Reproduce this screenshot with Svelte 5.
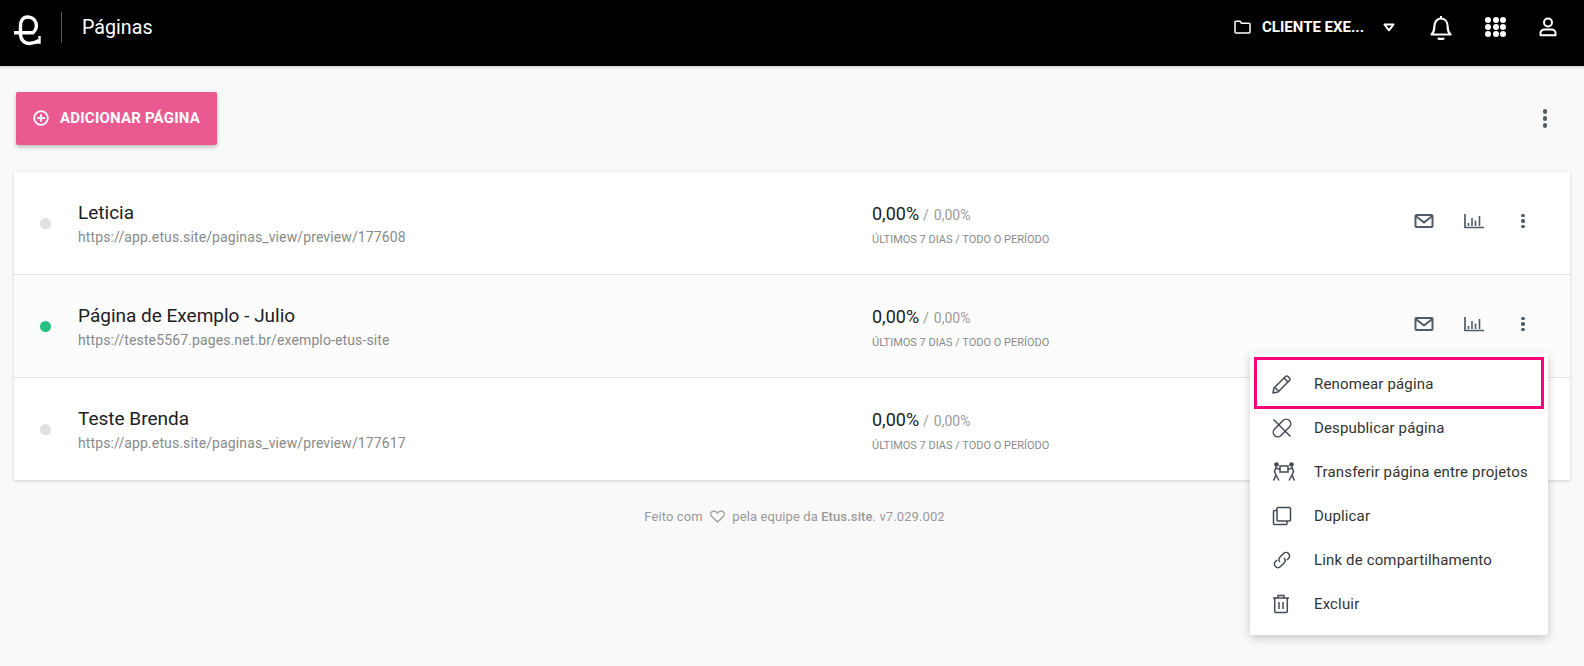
<script>
  const pages = [
    { name: 'Leticia', url: 'https://app.etus.site/paginas_view/preview/177608', on: false, hover: false, actions: true },
    { name: 'Página de Exemplo - Julio', url: 'https://teste5567.pages.net.br/exemplo-etus-site', on: true, hover: true, actions: true },
    { name: 'Teste Brenda', url: 'https://app.etus.site/paginas_view/preview/177617', on: false, hover: false, actions: false }
  ];
  const menu = ['Renomear página', 'Despublicar página', 'Transferir página entre projetos', 'Duplicar', 'Link de compartilhamento', 'Excluir'];
</script>

<header class="top">
  <svg class="logo" width="28" height="32" viewBox="0 0 28 32" fill="none" stroke="#fff" stroke-width="3.400">
    <path d="M0 17.700H19C22 15 23 12 22 8 21 4 17 2 13.500 2 9 2 6.500 6 6.500 11v8c0 6 4 9.500 9 9.500 3 0 6-1 9.500-3" />
    <path d="M25.500 21v6.500h-6" stroke-width="2.400" />
  </svg>
  <span class="divider"></span>
  <h1>Páginas</h1>
  <div class="top-right">
    <svg class="folder" width="17" height="14" viewBox="0 0 17 14" fill="none" stroke="#fff" stroke-width="1.500"><path d="M1 2.200c0-.6.400-1 1-1h4l1.500 2H15c.6 0 1 .4 1 1V12c0 .6-.4 1-1 1H2c-.6 0-1-.4-1-1z" /></svg>
    <span class="client">CLIENTE EXE...</span>
    <svg class="caret" width="12" height="9" viewBox="0 0 12 9" fill="none" stroke="#fff" stroke-width="2"><path d="M1.500 1.500h9L6 7.300z" stroke-linejoin="round" /></svg>
    <svg class="bell" width="22" height="25" viewBox="0 0 22 25" fill="none" stroke="#fff" stroke-width="2.200"><path d="M1.500 19.500c2.200-2 2.800-4 2.800-7.500 0-5 2.700-8.500 6.700-8.500s6.700 3.500 6.700 8.500c0 3.500.6 5.500 2.800 7.500z" stroke-linejoin="round" /><path d="M11 1v2" /><path d="M8 23c1 1.300 5 1.300 6 0" stroke-width="2.400" /></svg>
    <div class="grid-icon">{#each Array(9) as _}<i></i>{/each}</div>
    <svg class="user" width="18" height="20" viewBox="0 0 18 20" fill="none" stroke="#fff" stroke-width="2"><circle cx="9" cy="5.500" r="4" /><path d="M1.500 18.200v-2.500c0-1.800 2-3.200 3.500-3.200h8c1.500 0 3.500 1.400 3.500 3.200v2.500z" stroke-linejoin="round" /></svg>
  </div>
</header>

<main>
  <div class="toolbar">
    <button class="add">
      <svg width="16" height="16" viewBox="0 0 16 16" fill="none" stroke="#fff" stroke-width="1.800"><circle cx="8" cy="8" r="6.800" /><path d="M8 4.200v7.600M4.200 8h7.600" /></svg>
      ADICIONAR PÁGINA
    </button>
    <span class="kebab big"><i></i><i></i><i></i></span>
  </div>

  <section class="list">
    {#each pages as p}
      <article class="row" class:hover={p.hover}>
        <span class="dot" class:on={p.on}></span>
        <div class="info">
          <div class="name">{p.name}</div>
          <div class="url">{p.url}</div>
        </div>
        <div class="stats">
          <div class="pct"><b>0,00%</b><span class="sl">/</span><span>0,00%</span></div>
          <div class="period">ÚLTIMOS 7 DIAS / TODO O PERÍODO</div>
        </div>
        <div class="actions">
          {#if p.actions}
            <svg width="20" height="16" viewBox="0 0 20 16" fill="none" stroke="#4f5b66" stroke-width="2"><rect x="1.500" y="2" width="17" height="12" rx="1" /><path d="M2 3.200L10 9.500l8-6.300" /></svg>
            <svg width="20" height="16" viewBox="0 0 20 16" fill="none" stroke="#4f5b66"><path d="M1 1v13.500h19" stroke-width="1.700" /><path d="M4.500 13v-3M8 13V5M11.500 13V7.500M15.500 13V3" stroke-width="1.600" /></svg>
            <span class="kebab"><i></i><i></i><i></i></span>
          {/if}
        </div>
      </article>
    {/each}
  </section>

  <footer>Feito com <svg width="15" height="13" viewBox="0 0 15 13" fill="none" stroke="#9a9a9a" stroke-width="1.200"><path d="M7.500 12L1.800 6.500C.3 5 .5 3 1.500 2c1.500-1.500 4.200-1.200 6 1 1.800-2.200 4.500-2.500 6-1 1 1 1.200 3-.3 4.500z" stroke-linejoin="round" /></svg> pela equipe da <b>Etus.site</b>. v7.029.002</footer>
</main>

<div class="menu">
  {#each menu as m, i}
    <div class="item" class:sel={i === 0}>
      <span class="mi">
        {#if i === 0}
          <svg width="20" height="20" viewBox="0 0 20 20" fill="none" stroke="#454a52" stroke-width="1.500"><path d="M2 14l-1 5 5-1L17.500 6.500c.8-.8.800-1.700 0-2.500l-1.500-1.500c-.8-.8-1.700-.8-2.500 0z" stroke-linejoin="round" /><path d="M12 4l4 4M3 13.500L6.500 17" /></svg>
        {:else if i === 1}
          <svg width="20" height="20" viewBox="0 0 20 20" fill="none" stroke="#454a52" stroke-width="1.500"><path d="M1.500 1.500l17 17" /><rect x="-.5" y="5.500" width="21" height="9" rx="4.500" transform="rotate(-45 10 10)" /></svg>
        {:else if i === 2}
          <svg width="24" height="20" viewBox="0 0 24 20" fill="none" stroke="#454a52" stroke-width="1.500"><circle cx="4.500" cy="2.500" r="1.600" fill="#454a52" /><circle cx="19.500" cy="2.500" r="1.600" fill="#454a52" /><rect x="8" y="4" width="8" height="6" /><path d="M8 7H6L4 5.500 2.500 9.500 4 13l-2.500 5.500M4 13l3 5.500M16 7h2l2-1.500 1.500 4L20 13l2.500 5.500M20 13l-3 5.500" /></svg>
        {:else if i === 3}
          <svg width="20" height="20" viewBox="0 0 20 20" fill="none" stroke="#454a52" stroke-width="1.500"><rect x="5" y="1.500" width="13.500" height="13.500" rx="1" /><path d="M5 4.500H2.500c-.6 0-1 .4-1 1V17.500c0 .6.400 1 1 1H14c.6 0 1-.4 1-1V15" /></svg>
        {:else if i === 4}
          <svg width="20" height="20" viewBox="0 0 20 20" fill="none" stroke="#454a52" stroke-width="1.500"><path d="M8 12c-1.500-1.500-1.500-3.500 0-5l3.500-3.500c1.500-1.500 3.500-1.500 5 0s1.500 3.500 0 5L15 10" /><path d="M12 8c1.500 1.500 1.500 3.500 0 5l-3.500 3.500c-1.500 1.500-3.500 1.500-5 0s-1.500-3.500 0-5L5 10" /></svg>
        {:else}
          <svg width="18" height="20" viewBox="0 0 18 20" fill="none" stroke="#454a52" stroke-width="1.500"><path d="M1 4h16M6 4V1.500h6V4M2.700 4v13.500c0 .6.400 1 1 1h10.600c.6 0 1-.4 1-1V4" /><path d="M7 8v7M11 8v7" /></svg>
        {/if}
      </span>
      <span>{m}</span>
    </div>
  {/each}
</div>

<style>
  :global(body) { margin: 0; background: #f9f9f9; font-family: Roboto, sans-serif; height: 666px; overflow: hidden; }
  .top { height: 66px; background: #000; display: flex; align-items: center; color: #fff; padding: 0 0 12px 14px; box-sizing: border-box; box-shadow: 0 1px 3px rgba(0,0,0,.2); }
  .logo { flex: none; margin-top: 8px; }
  .divider { width: 1px; height: 31px; background: #555; margin: 0 20px 0 19px; }
  h1 { margin: 0; font-size: 19.700px; font-weight: 400; color: #fff; }
  .top-right { margin-left: auto; display: flex; align-items: center; }
  .folder { margin-right: 11px; }
  .client { font-size: 15px; font-weight: 700; width: 110px; white-space: nowrap; }
  .caret { margin: 0 0 0 11px; }
  .bell { margin-left: 35px; }
  .grid-icon { display: grid; grid-template-columns: repeat(3, 6px); grid-auto-rows: 7px; gap: 0 1.500px; margin-left: 33px; }
  .grid-icon i { width: 6px; height: 6px; border-radius: 50%; background: #fff; }
  .user { margin: 0 27px 0 33px; }

  main { padding: 26px 14px 0; }
  .toolbar { display: flex; align-items: center; justify-content: space-between; padding-left: 2px; height: 53px; }
  .add { width: 201px; height: 53px; background: #ea5a90; border: 0; border-radius: 2px; color: #fff; font: 700 15px Roboto, sans-serif; letter-spacing: .2px; display: flex; align-items: center; justify-content: center; gap: 11px; box-shadow: 0 2px 4px rgba(0,0,0,.25); padding: 0 0 2px; }
  .kebab { display: flex; flex-direction: column; gap: 2px; align-items: center; width: 20px; }
  .kebab i { width: 3.500px; height: 3.500px; border-radius: 50%; background: #4f5b66; }
  .kebab.big { margin-right: 15px; gap: 2.500px; }
  .kebab.big i { width: 4.500px; height: 4.500px; }

  .list { margin-top: 27px; background: #fff; box-shadow: 0 1px 3px rgba(0,0,0,.16); }
  .row { height: 102px; display: flex; align-items: center; background: #fff; border-bottom: 1px solid #e4e4e4; padding-left: 26px; }
  .row:last-child { border-bottom: 0; }
  .row.hover { background: #fcfcfc; }
  .dot { width: 11px; height: 11px; border-radius: 50%; background: #e0e0e0; margin-right: 27px; flex: none; }
  .dot.on { background: #26c281; }
  .info { width: 794px; flex: none; padding-top: 2px; }
  .name { font-size: 19px; font-weight: 400; line-height: 22px; color: #212121; }
  .url { font-size: 14px; line-height: 20px; color: #8a8a8a; margin-top: 3px; letter-spacing: .12px; }
  .stats { width: 542px; flex: none; padding-top: 4px; box-sizing: border-box; }
  .pct { font-size: 14px; color: #9a9a9a; line-height: 22px; }
  .pct b { font-size: 18px; font-weight: 400; color: #212121; }
  .sl { margin: 0 5px 0 4px; }
  .period { font-size: 11px; line-height: 14px; color: #8a8a8a; margin-top: 7px; }
  .actions { display: flex; align-items: center; gap: 29.500px; position: relative; top: -2px; }

  footer { margin-top: 28px; padding-left: 5px; text-align: center; font-size: 13px; letter-spacing: .1px; line-height: 18px; color: #9a9a9a; }
  footer svg { margin: 0 4px; vertical-align: -2px; }
  footer b { font-weight: 500; }

  .menu { position: absolute; left: 1250px; top: 353px; width: 298px; height: 282px; background: #fff; box-shadow: 0 3px 10px rgba(0,0,0,.2); border-radius: 2px; padding-top: 9px; box-sizing: border-box; }
  .item { height: 44px; display: flex; align-items: center; font-size: 15px; letter-spacing: .15px; color: #333; padding-left: 22px; position: relative; }
  .item.sel::after { content: ''; position: absolute; left: 4px; right: 4px; top: -5px; bottom: -3px; border: 3px solid #f5047e; }
  .mi { width: 42px; flex: none; display: flex; align-items: center; }
</style>
